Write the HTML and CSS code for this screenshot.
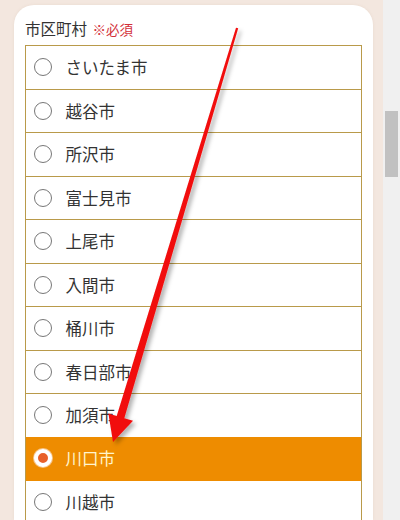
FILE: index.html
```html
<!DOCTYPE html>
<html lang="ja">
<head>
<meta charset="utf-8">
<link rel="stylesheet" href="styles.css">
</head>
<body>
<div class="page">
  <main class="main">
    <section class="card">
      <div class="label">市区町村 <span class="req">※必須</span></div>
      <ul class="list">
        <li class="row"><span class="radio"></span><span class="name">さいたま市</span></li>
        <li class="row"><span class="radio"></span><span class="name">越谷市</span></li>
        <li class="row"><span class="radio"></span><span class="name">所沢市</span></li>
        <li class="row"><span class="radio"></span><span class="name">富士見市</span></li>
        <li class="row"><span class="radio"></span><span class="name">上尾市</span></li>
        <li class="row"><span class="radio"></span><span class="name">入間市</span></li>
        <li class="row"><span class="radio"></span><span class="name">桶川市</span></li>
        <li class="row"><span class="radio"></span><span class="name">春日部市</span></li>
        <li class="row"><span class="radio"></span><span class="name">加須市</span></li>
        <li class="row selected"><span class="radio"></span><span class="name">川口市</span></li>
        <li class="row"><span class="radio"></span><span class="name">川越市</span></li>
      </ul>
    </section>
  </main>
  <div class="scrollbar"><div class="thumb"></div></div>
</div>
<svg class="arrow" width="400" height="520" viewBox="0 0 400 520">
  <defs>
    <filter id="sh" x="-20%" y="-20%" width="140%" height="140%">
      <feDropShadow dx="3" dy="3" stdDeviation="2" flood-color="#000" flood-opacity="0.3"/>
    </filter>
  </defs>
  <polygon filter="url(#sh)" fill="#f10d0d" points="236,27.7 238.2,28.3 124.3,418.2 133,420.8 113,442 108.4,413.5 116.7,415.9"/>
</svg>
</body>
</html>
```
FILE: styles.css
```css
* { box-sizing: border-box; }
html, body { margin: 0; padding: 0; }
body {
  width: 400px;
  height: 520px;
  overflow: hidden;
  background: #f3e7df;
  font-family: "Noto Sans CJK JP", "Noto Sans", sans-serif;
  color: #333;
}
.page {
  display: flex;
  height: 520px;
  overflow: hidden;
}
.main {
  width: 383px;
  height: 520px;
  overflow: hidden;
  padding: 5px 10px 0 14px;
}
.card {
  background: #fff;
  border-radius: 20px 20px 0 0;
  height: 515px;
  overflow: hidden;
  padding: 12px 11px 0 11px;
  box-shadow: 0 0 3px rgba(180, 150, 120, 0.15);
}
.label {
  font-size: 15.5px;
  line-height: 23px;
  height: 28px;
  color: #333;
}
.req {
  color: #d3303a;
  font-size: 13.5px;
  margin-left: 2px;
}
.list {
  list-style: none;
  margin: 0;
  padding: 0;
  border: 1px solid #b99a4a;
  border-bottom: none;
}
.row {
  display: flex;
  align-items: center;
  gap: 14px;
  height: 43.5px;
  padding-left: 7.5px;
  border-bottom: 1px solid #b99a4a;
  font-size: 16.5px;
  color: #333;
  background: #fff;
}
.radio {
  width: 18px;
  height: 18px;
  border-radius: 50%;
  border: 1px solid #777;
  background: #fff;
  flex: none;
}
.selected {
  background: #ee8c00;
  color: #fff4cc;
  border-bottom-color: #ee8c00;
  margin-top: -1px;
  height: 44.5px;
}
.selected .radio {
  border: 4px solid #fff;
  background: #e8602a;
  box-shadow: 0 0 0 1px #f7c58a;
}
.scrollbar {
  width: 17px;
  background: #f0f0f0;
  padding: 111px 2px 0 2px;
}
.thumb {
  width: 13px;
  height: 66px;
  background: #c1c1c1;
}
.arrow {
  position: absolute;
  left: 0;
  top: 0;
  pointer-events: none;
}
```
